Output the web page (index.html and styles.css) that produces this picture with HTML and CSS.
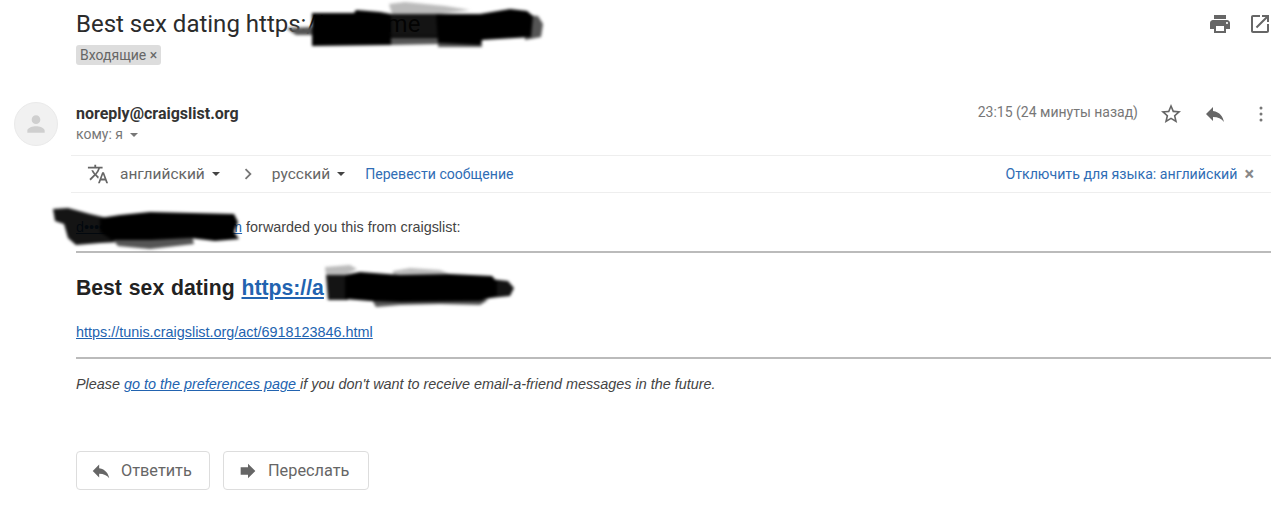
FILE: index.html
```html
<!doctype html>
<html>
<head>
    <meta charset="utf-8">
    <title>Best sex dating</title>
    <link rel="stylesheet" href="styles.css">
</head>
<body>
    <header class="subject">
        <div class="subject-text">
            <h1>Best sex dating https://•••••••.me</h1>
            <span class="chip">Входящие <span class="chip-x">×</span></span>
        </div>
        <div class="subject-tools">
            <svg class="icon" viewBox="0 0 24 24"><path d="M19 8H5c-1.66 0-3 1.34-3 3v6h4v4h12v-4h4v-6c0-1.66-1.34-3-3-3zm-3 11H8v-5h8v5zm3-7c-.55 0-1-.45-1-1s.45-1 1-1 1 .45 1 1-.45 1-1 1zm-1-9H6v4h12V3z"/></svg>
            <svg class="icon" viewBox="0 0 24 24"><path d="M19 19H5V5h7V3H5c-1.11 0-2 .9-2 2v14c0 1.1.89 2 2 2h14c1.1 0 2-.9 2-2v-7h-2v7zM14 3v2h3.59l-9.83 9.83 1.41 1.41L19 6.41V10h2V3h-7z"/></svg>
        </div>
    </header>

    <section class="message">
        <div class="avatar">
            <svg viewBox="0 0 24 24"><path d="M12 12c2.2 0 4-1.8 4-4s-1.8-4-4-4-4 1.8-4 4 1.8 4 4 4zm0 2c-2.7 0-8 1.3-8 4v2h16v-2c0-2.7-5.3-4-8-4z"/></svg>
        </div>
        <div class="message-main">
            <div class="sender">
                <div>
                    <div class="sender-name">noreply@craigslist.org</div>
                    <div class="sender-to">кому: я <span class="caret small"></span></div>
                </div>
                <div class="sender-tools">
                    <span class="time">23:15 (24 минуты назад)</span>
                    <svg class="icon star" viewBox="0 0 24 24"><path d="M22 9.24l-7.19-.62L12 2 9.19 8.63 2 9.24l5.46 4.73L5.82 21 12 17.27 18.18 21l-1.63-7.03L22 9.24zM12 15.4l-3.76 2.27 1-4.28-3.32-2.88 4.38-.38L12 6.1l1.71 4.04 4.38.38-3.32 2.88 1 4.28L12 15.4z"/></svg>
                    <svg class="icon reply" viewBox="0 0 24 24"><path d="M10 9V5l-7 7 7 7v-4.1c5 0 8.5 1.6 11 5.1-1-5-4-10-11-11z"/></svg>
                    <svg class="icon more" viewBox="0 0 24 24"><circle cx="12" cy="6" r="1.5"/><circle cx="12" cy="12" r="1.5"/><circle cx="12" cy="18" r="1.5"/></svg>
                </div>
            </div>

            <div class="translate">
                <svg class="icon lang" viewBox="0 0 24 24"><path d="M12.87 15.07l-2.54-2.51.03-.03c1.74-1.94 2.98-4.17 3.71-6.53H17V4h-7V2H8v2H1v1.99h11.17C11.5 7.92 10.44 9.75 9 11.35 8.07 10.32 7.3 9.19 6.69 8h-2c.73 1.63 1.73 3.17 2.98 4.56l-5.09 5.02L4 19l5-5 3.11 3.11.76-2.04zM18.5 10h-2L12 22h2l1.12-3h4.75L21 22h2l-4.5-12zm-2.62 7l1.62-4.33L19.12 17h-3.24z"/></svg>
                <span class="lang-name">английский</span><span class="caret"></span>
                <svg class="icon chevron" viewBox="0 0 24 24"><path d="M10 6L8.6 7.4 13.2 12l-4.6 4.6L10 18l6-6z"/></svg>
                <span class="lang-name">русский</span><span class="caret"></span>
                <a class="link translate-go">Перевести сообщение</a>
                <a class="link translate-off">Отключить для языка: английский</a>
                <span class="translate-x">×</span>
            </div>

            <div class="body">
                <p class="forwarded"><a class="mail-link">d•••••••••••••••••••••••••••••m</a> forwarded you this from craigslist:</p>
                <hr>
                <h2>Best sex dating <a class="mail-link">https://a</a></h2>
                <p class="act-link"><a class="mail-link">https://tunis.craigslist.org/act/6918123846.html</a></p>
                <hr>
                <p class="footnote">Please <a class="mail-link">go to the preferences page </a>if you don't want to receive email-a-friend messages in the future.</p>
            </div>

            <div class="actions">
                <button type="button" class="btn-reply">
                    <svg class="icon" viewBox="0 0 24 24"><path d="M10 9V5l-7 7 7 7v-4.1c5 0 8.5 1.6 11 5.1-1-5-4-10-11-11z"/></svg>
                    Ответить
                </button>
                <button type="button" class="btn-forward">
                    <svg class="icon" viewBox="0 0 24 24"><path d="M12 8V4l8 8-8 8v-4H4V8z"/></svg>
                    Переслать
                </button>
            </div>
        </div>
    </section>

    <!-- marker scribbles over the screenshot, page coordinates -->
    <svg class="scribbles" viewBox="0 0 1280 530">
        <!-- subject -->
        <path class="light" d="M389 4 L405 2 L445 6 L470 10 L440 14 L392 14 Z"/>
        <path class="mid" d="M286 28 L312 27 L312 35 L296 35 Z"/>
        <path class="mid" d="M390 36 L440 36 L440 44 L390 45 Z"/>
        <path class="mid" d="M438 40 L482 40 L482 47 L438 47 Z"/>
        <path class="dark" d="M390 14 L440 14 L440 38 L390 38 Z"/>
        <path class="mid" d="M525 15 L538 16 L543 24 L541 37 L525 40 Z"/>
        <path d="M312 13 L354 13 L356 10 L380 12 L391 14 L391 45 L312 46 Z"/>
        <path d="M436 14 L480 14 L510 9 L527 11 L533 16 L531 37 L482 40 L480 45 L438 43 Z"/>
        <!-- sender -->
        <path class="dark" d="M53 209 L68 208 L90 214 L107 218 L120 222 L120 242 L100 243 L76 245 L68 238 L64 224 L55 221 Z"/>
        <path class="mid" d="M110 236 L192 236 L194 244 L150 249 L118 246 Z"/>
        <path d="M100 218 L120 215 L150 212 L234 214 L238 222 L234 232 L239 239 L215 241 L190 238 L150 240 L112 240 L100 232 Z"/>
        <!-- heading -->
        <path class="light" d="M325 267 L350 265 L357 269 L345 275 L326 275 Z"/>
        <path class="light" d="M393 271 L410 268 L440 270 L452 275 L393 276 Z"/>
        <path class="dark" d="M326 275 L348 275 L348 300 L328 300 Z"/>
        <path class="mid" d="M372 300 L488 300 L480 305 L440 304 L400 305 L376 307 Z"/>
        <path class="dark" d="M490 279 L508 281 L514 288 L510 296 L490 298 Z"/>
        <path d="M345 275 L360 272 L400 275 L450 274 L492 276 L497 282 L497 296 L480 301 L400 302 L370 301 L345 299 Z"/>
    </svg>
</body>
</html>
```

FILE: styles.css
```css
/* Reset */
* { padding:0; margin:0; box-sizing:border-box; }

/* Page Style */
body {
    position: relative;
    width: 1280px;
    height: 530px;
    overflow: hidden;
    background-color: #fff;
    color: #222;
    font-family: Roboto, Arial, sans-serif;
}
.icon { display:block; width:24px; height:24px; fill:#666; flex:none; }
.link { color:#2f6db5; }
.mail-link { color:#2263b0; text-decoration:underline; }

/* Subject */
.subject {
    display: flex;
    justify-content: space-between;
    padding: 10px 8px 0 76px;
    height: 102px;
}
h1 {
    font-size: 24px;
    font-weight: 400;
    line-height: 28px;
    margin-bottom: 7px;
    white-space: nowrap;
    color: #2b2b2b;
}
.chip {
    display: inline-block;
    background-color: #ddd;
    color: #666;
    font-size: 14px;
    line-height: 20px;
    padding: 0 4px;
    border-radius: 3px;
}
.subject-tools { display:flex; gap:16px; margin-top:2px; }

/* Sender */
.message { display:flex; padding:0 9px 0 14px; }
.avatar {
    width: 44px;
    height: 44px;
    border-radius: 50%;
    background-color: #f1f1f1;
    border: 1px solid #eaeaea;
    display: flex;
    align-items: center;
    justify-content: center;
    flex: none;
}
.avatar svg { width:26px; height:26px; fill:#cfcfcf; }
.message-main { flex:1; margin-left:18px; }
.sender {
    display: flex;
    justify-content: space-between;
    height: 53px;
}
.sender-name { font-size:16px; font-weight:700; line-height:22px; color:#333; padding-top:1px; margin-bottom:-1px; }
.sender-to { font-size:14px; line-height:20px; color:#777; }
.sender-tools { display:flex; align-items:flex-start; height:22px; margin-right:-1px; }
.time { font-size:14px; line-height:20px; color:#777; margin-right:21px; }
.star { margin-right:20px; }
.reply { margin-right:22px; }
.more { margin-right:-1px; fill:#777; }

.caret {
    display: inline-block;
    border: 4px solid transparent;
    border-top: 4px solid #444;
    border-bottom: 0;
    margin-left: 7px;
}
.caret.small { border-top-color:#777; margin-left:4px; vertical-align:2px; }

/* Translate bar */
.translate {
    display: flex;
    align-items: center;
    height: 38px;
    margin-left: -5px;
    padding-left: 16px;
    border-top: 1px solid #eee;
    border-bottom: 1px solid #eee;
    font-size: 14px;
    color: #666;
}
.lang { margin-right:11px; width:22px; height:22px; }
.lang-name { font-size:15.5px; }
.chevron { margin:0 13px 0 17px; width:22px; height:22px; fill:#777; }
.translate-go { margin-left:20px; font-size:14.1px; }
.translate-off { margin-left:auto; font-size:14.2px; }
.translate-x { margin:0 17px 0 7px; color:#888; font-size:18px; font-weight:700; line-height:18px; }

/* Mail body */
.body { font-family:"Liberation Sans", Arial, sans-serif; color:#444; }
.forwarded { font-size:14.4px; line-height:16px; padding-top:26px; margin-bottom:16px; white-space:nowrap; }
hr { border:0; border-top:2px solid #bbb; }
h2 { font-size:21.2px; font-weight:700; line-height:24px; color:#222; margin-top:23px; white-space:nowrap; word-spacing:1px; }
.act-link { font-size:14.4px; line-height:16px; margin-top:24px; margin-bottom:17px; }
.footnote { font-size:14.4px; font-style:italic; line-height:16px; margin-top:17px; }

/* Reply buttons */
.actions { display:flex; gap:13px; margin-top:59px; }
button {
    display: flex;
    align-items: center;
    height: 39px;
    background-color: #fff;
    border: 1px solid #ddd;
    border-radius: 4px;
    font-family: Roboto, Arial, sans-serif;
    font-size: 16.3px;
    color: #666;
    padding-left: 13px;
}
.btn-reply { width:134px; }
.btn-forward { width:146px; }
button .icon { width:22px; height:22px; margin-right:9px; }

/* Scribbles */
.scribbles {
    position: absolute;
    left: 0;
    top: 0;
    width: 1280px;
    height: 530px;
    fill: #000;
    filter: blur(1.5px);
    pointer-events: none;
}
.scribbles .light { fill:#bbb; }
.scribbles .mid { fill:#555; }
.scribbles .dark { fill:#000; fill-opacity:.92; }
```
